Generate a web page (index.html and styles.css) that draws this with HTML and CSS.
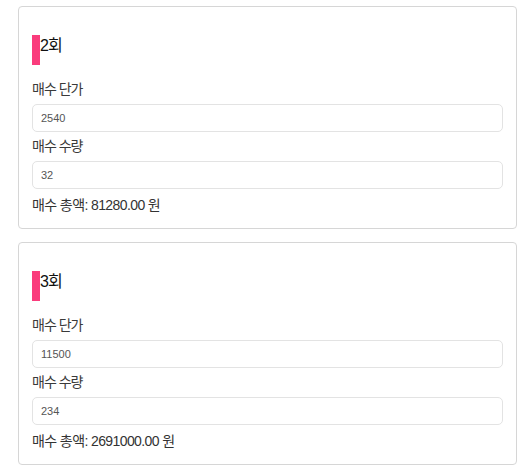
FILE: index.html
```html
<!DOCTYPE html>
<html lang="ko">
<head>
<meta charset="utf-8">
<link rel="stylesheet" href="styles.css">
</head>
<body>
<div class="list">
  <section class="card">
    <h3 class="round"><span class="mark"></span><span class="round-title">2회</span></h3>
    <label class="field-label">매수 단가</label>
    <input class="field" type="text" value="2540">
    <label class="field-label">매수 수량</label>
    <input class="field" type="text" value="32">
    <p class="total">매수 총액: 81280.00 원</p>
  </section>
  <section class="card">
    <h3 class="round"><span class="mark"></span><span class="round-title">3회</span></h3>
    <label class="field-label">매수 단가</label>
    <input class="field" type="text" value="11500">
    <label class="field-label">매수 수량</label>
    <input class="field" type="text" value="234">
    <p class="total">매수 총액: 2691000.00 원</p>
  </section>
</div>
</body>
</html>
```

FILE: styles.css
```css
html, body {
  margin: 0;
  padding: 0;
  background: #ffffff;
}

body {
  font-family: "Liberation Sans", "Noto Sans CJK KR", Arial, sans-serif;
  color: #333;
}

.list {
  display: flex;
  flex-direction: column;
  gap: 13px;
  padding: 6px 15px 0 18px;
}

.card {
  border: 1px solid #d6d6d6;
  border-radius: 4px;
  background: #fff;
  padding: 13px 13px 13px 13px;
  display: flex;
  flex-direction: column;
}

.round {
  display: flex;
  align-items: flex-start;
  margin: 15px 0 14px 0;
  font-weight: normal;
  font-size: 16px;
  line-height: 20px;
  color: #111;
}

.mark {
  display: block;
  width: 8px;
  height: 30px;
  background: #fa3c7c;
  flex: none;
}

.round-title {
  display: block;
  margin-top: 1px;
  letter-spacing: -1px;
}

.field-label {
  display: block;
  font-size: 14px;
  line-height: 20px;
  margin-bottom: 5px;
  color: #3a3a3a;
  letter-spacing: -1px;
}

.field {
  display: block;
  box-sizing: border-box;
  width: 100%;
  height: 28px;
  margin: 0 0 4px 0;
  padding: 0 8px;
  border: 1px solid #e3e3e3;
  border-radius: 5px;
  background: #fff;
  font-family: "Liberation Sans", Arial, sans-serif;
  font-size: 11px;
  color: #555;
  outline: none;
}

.total {
  margin: 2px 0 0 0;
  font-size: 14px;
  line-height: 20px;
  color: #333;
  letter-spacing: -0.6px;
}
```
